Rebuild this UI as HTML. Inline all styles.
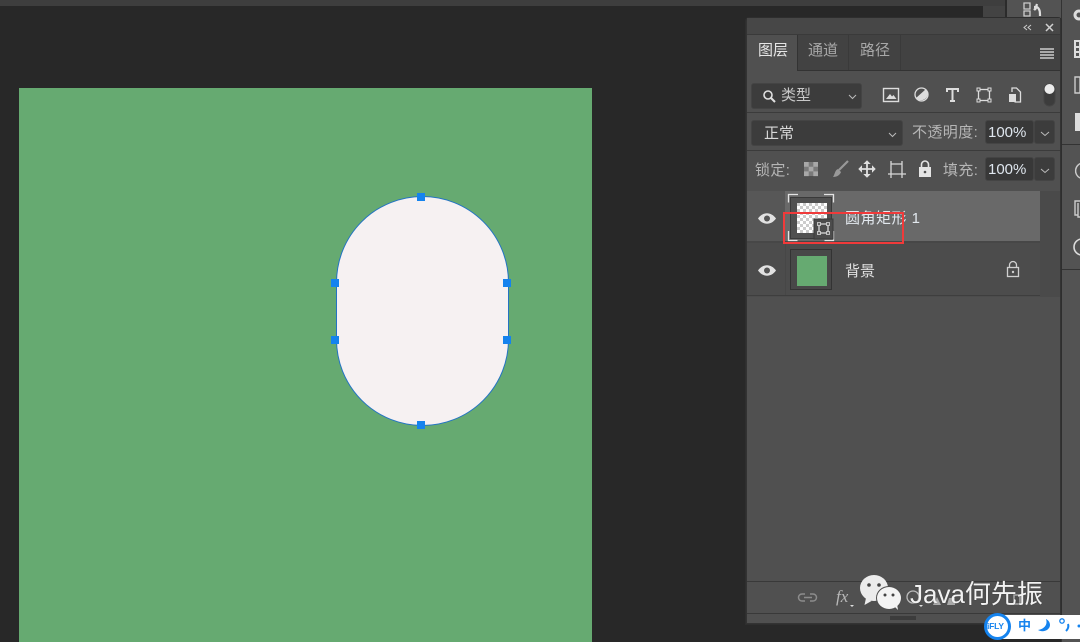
<!DOCTYPE html>
<html><head><meta charset="utf-8">
<style>
html,body{margin:0;padding:0}
body{width:1080px;height:642px;overflow:hidden;position:relative;background:#282828;font-family:"Liberation Sans","Noto Sans CJK SC",sans-serif}
.a{position:absolute;box-sizing:border-box}
.t{position:absolute;white-space:nowrap;line-height:1;filter:blur(.3px)}
.h{position:absolute;width:8px;height:8px;background:#1583ee}
svg{position:absolute;overflow:visible}
.box{position:absolute;background:#3c3c3c;border:1px solid #444;border-radius:3px;box-sizing:border-box}
</style></head><body>
<div class="a" style="left:0;top:0;width:1080px;height:6px;background:#3e3e3e"></div>
<div class="a" style="left:983px;top:6px;width:22px;height:12px;background:#434343"></div>
<div class="a" style="left:1005px;top:0;width:2px;height:18px;background:#2b2b2b"></div>
<!-- right strips -->
<div class="a" style="left:1007px;top:0;width:54px;height:18px;background:#535353"></div>
<div class="a" style="left:1061px;top:0;width:19px;height:642px;background:#535353;border-left:1px solid #333"></div>
<div class="a" style="left:1062px;top:144px;width:18px;height:1px;background:#333"></div>
<div class="a" style="left:1062px;top:269px;width:18px;height:1px;background:#333"></div>
<svg style="left:0;top:0" width="1080" height="642" fill="none">
<path d="M1024 3h6v6h-6zM1024 11h6v5h-6z" stroke="#ccc" stroke-width="1.3"/>
<path d="M1040 16c0-4 0-7-3-9l-3 3M1037 7h-3M1037 4l-2 6" stroke="#ddd" stroke-width="2.200"/>
<circle cx="1079" cy="15" r="4" stroke="#ddd" stroke-width="3"/>
<path d="M1075 41h5v16h-5z M1075 47h5M1075 52h5" stroke="#ddd" stroke-width="2"/>
<path d="M1075 77h5v16h-5z" stroke="#ccc" stroke-width="1.4"/>
<path d="M1075 113h5v18h-5z" fill="#ddd"/>
<path d="M1082 163a8 8 0 0 0-2 15" stroke="#ccc" stroke-width="1.4"/>
<path d="M1082 201h-7v14h3M1078 203v14h4" stroke="#ccc" stroke-width="1.4"/>
<path d="M1082 239a8 8 0 0 0 0 16" stroke="#ddd" stroke-width="1.6"/>
</svg>
<!-- canvas -->
<div class="a" style="left:335.500px;top:196.500px;width:0;height:0"></div>
<div class="a" style="left:19px;top:88px;width:573px;height:554px;background:#66aa71"></div>
<div class="a" style="left:335.500px;top:196px;width:173px;height:230px;border-radius:86.500px;background:#f6f1f2;border:1.500px solid #2373c4"></div>
<div class="h" style="left:417px;top:193px"></div>
<div class="h" style="left:417px;top:421px"></div>
<div class="h" style="left:331px;top:279px"></div>
<div class="h" style="left:503px;top:279px"></div>
<div class="h" style="left:331px;top:336px"></div>
<div class="h" style="left:503px;top:336px"></div>
<!-- panel -->
<div class="a" style="left:746px;top:18px;width:315px;height:606px;background:#505050;border:1px solid #333;border-top:0;border-radius:3px 3px 0 0;box-shadow:0 0 0 1px #2e2e2e"></div>
<div class="a" style="left:747px;top:18px;width:313px;height:17px;background:#474747;border-bottom:1px solid #3a3a3a"></div>
<div class="a" style="left:747px;top:35px;width:313px;height:36px;background:#424242;border-bottom:1px solid #333"></div>
<div class="a" style="left:747px;top:35px;width:51px;height:36px;background:#505050;border-right:1px solid #333"></div>
<div class="a" style="left:848px;top:35px;width:1px;height:35px;background:#3a3a3a"></div>
<div class="a" style="left:900px;top:35px;width:1px;height:35px;background:#3a3a3a"></div>
<div class="t" style="left:758px;top:43px;font-size:15px;color:#e6e6e6">图层</div>
<div class="t" style="left:808px;top:43px;font-size:15px;color:#a8a8a8">通道</div>
<div class="t" style="left:860px;top:43px;font-size:15px;color:#a8a8a8">路径</div>
<svg style="left:0;top:0" width="1080" height="642" fill="none">
<path d="M1027 25l-3 2.500 3 2.500M1031 25l-3 2.500 3 2.500" stroke="#ccc" stroke-width="1"/>
<path d="M1046 24l7 7M1053 24l-7 7" stroke="#d0d0d0" stroke-width="1.5"/>
<path d="M1040 49h14M1040 52h14M1040 55h14M1040 58h14" stroke="#ccc" stroke-width="1.5"/>
</svg>
<!-- row 1 -->
<div class="a" style="left:747px;top:112px;width:313px;height:1px;background:#3b3b3b"></div>
<div class="box" style="left:751px;top:83px;width:111px;height:26px"></div>
<svg style="left:0;top:0" width="1080" height="642" fill="none">
<circle cx="768" cy="95" r="4" stroke="#e0e0e0" stroke-width="1.6"/><path d="M771 98l4 4" stroke="#e0e0e0" stroke-width="2"/>
<path d="M849 95l3.500 3.500 3.500-3.500" stroke="#bbb"/>
<rect x="883.500" y="88.500" width="15" height="13" stroke="#ddd" stroke-width="1.4"/><path d="M886 99l4-5 2 2.500 1.500-1.500 3 4z" fill="#ddd"/>
<circle cx="921.500" cy="94.500" r="6.500" stroke="#ddd" stroke-width="1.300"/><path d="M916 98a6.500 6.500 0 0 0 10-9z" fill="#ddd"/>
<path d="M947 92v-3h11v3M952.500 89v12M950 101h5" stroke="#ddd" stroke-width="2"/>
<rect x="978.500" y="89.500" width="11" height="11" stroke="#ddd" stroke-width="1.3"/>
<path d="M977 88h3v3h-3zM988 88h3v3h-3zM977 99h3v3h-3zM988 99h3v3h-3z" fill="#4f4f4f" stroke="#ddd"/>
<path d="M1012 92v-4h4.500l4 4v10h-6" stroke="#ddd" stroke-width="1.300"/><rect x="1009" y="94" width="7" height="8" fill="#ddd"/>
<rect x="1044" y="84" width="11" height="22" rx="5.500" fill="#3c3c3c" stroke="#444"/><circle cx="1049.500" cy="89" r="5" fill="#ececec"/>
</svg>
<div class="t" style="left:781px;top:88px;font-size:15px;color:#c8c8c8">类型</div>
<!-- row 2 -->
<div class="a" style="left:747px;top:150px;width:313px;height:1px;background:#3b3b3b"></div>
<div class="box" style="left:751px;top:120px;width:152px;height:26px"></div>
<div class="t" style="left:764px;top:126px;font-size:15px;color:#d8d8d8">正常</div>
<div class="t" style="left:912px;top:125px;font-size:15px;letter-spacing:.4px;color:#b5b5b5">不透明度:</div>
<div class="box" style="left:985px;top:120px;width:49px;height:24px;background:#383838"></div>
<div class="box" style="left:1034px;top:120px;width:21px;height:24px"></div>
<div class="t" style="left:988px;top:125px;font-size:15px;color:#dfe6ee">100%</div>
<!-- row 3 -->
<div class="t" style="left:755px;top:163px;font-size:15px;letter-spacing:.4px;color:#b5b5b5">锁定:</div>
<div class="t" style="left:943px;top:163px;font-size:15px;letter-spacing:.4px;color:#b5b5b5">填充:</div>
<div class="box" style="left:985px;top:157px;width:49px;height:24px;background:#383838"></div>
<div class="box" style="left:1034px;top:157px;width:21px;height:24px"></div>
<div class="t" style="left:988px;top:162px;font-size:15px;color:#dfe6ee">100%</div>
<svg style="left:0;top:0" width="1080" height="642" fill="none">
<path d="M889 133l3.500 3.500 3.500-3.500" stroke="#bbb"/>
<path d="M1041 132l4 3.500 4-3.500M1041 169l4 3.500 4-3.500" stroke="#bbb"/>
<rect x="804" y="162" width="14" height="14" fill="#7a7a7a"/><path d="M804 162h4.700v4.700h-4.700zM813.300 162h4.700v4.700h-4.700zM808.700 166.700h4.700v4.700h-4.700zM804 171.400h4.700v4.700h-4.700zM813.300 171.400h4.700v4.700h-4.700z" fill="#a8a8a8"/>
<path d="M848 161l-9 9" stroke="#999" stroke-width="2.200"/><path d="M838 169c-3 1-3 5-5 8 4 0 7-2 8-5z" fill="#999"/>
<path d="M867 163v12M861 169h12" stroke="#e0e0e0" stroke-width="1.800"/><path d="M867 161l-2.500 2.500h5zM867 177l-2.500-2.500h5zM859 169l2.500-2.500v5zM875 169l-2.500-2.500v5z" fill="#e0e0e0" stroke="#e0e0e0"/>
<path d="M891 164h11v10h-11zM888 174h18M891 161v17M902 161v17" stroke="#d8d8d8" stroke-width="1.300"/>
<rect x="919" y="167" width="12" height="10" fill="#e4e4e4"/><path d="M921.500 167v-2.500a3.500 3.500 0 0 1 7 0v2.500" stroke="#e4e4e4" stroke-width="1.600"/><circle cx="925" cy="172" r="1.300" fill="#4f4f4f"/>
</svg>
<!-- layers -->
<div class="a" style="left:747px;top:191px;width:293px;height:106px;background:#4c4c4c"></div>
<div class="a" style="left:1040px;top:191px;width:20px;height:106px;background:#4a4a4a"></div>
<div class="a" style="left:785px;top:191px;width:255px;height:50px;background:#696969"></div>
<div class="a" style="left:747px;top:191px;width:38px;height:50px;background:#575757"></div>
<div class="a" style="left:747px;top:241px;width:293px;height:2px;background:#474747"></div>
<div class="a" style="left:747px;top:295px;width:293px;height:1px;background:#3e3e3e"></div>
<div class="a" style="left:785px;top:243px;width:1px;height:52px;background:#474747"></div>
<svg style="left:0;top:0" width="1080" height="642">
<defs><pattern id="c" width="6" height="6" patternUnits="userSpaceOnUse" x="797" y="203"><rect width="6" height="6" fill="#fff"/><rect width="3" height="3" fill="#ccc"/><rect x="3" y="3" width="3" height="3" fill="#ccc"/></pattern></defs>
<path d="M758 218.500c5-7 13-7 18 0c-5 7-13 7-18 0z" fill="#e2e2e2"/><circle cx="767" cy="218.500" r="3" fill="#555"/>
<path d="M758 270.500c5-7 13-7 18 0c-5 7-13 7-18 0z" fill="#e2e2e2"/><circle cx="767" cy="270.500" r="3" fill="#555"/>
<rect x="790.500" y="197.500" width="41" height="41" fill="#505050" stroke="#3a3a3a"/>
<path d="M798 194.500h-9.500v8M824 194.500h9.500v8M788.500 231v9.500h9M833.500 231v9.500h-9" fill="none" stroke="#e4e4e4" stroke-width="1.300"/>
<rect x="797" y="203" width="30" height="30" fill="url(#c)"/>
<rect x="814" y="219" width="19" height="20" fill="#4c4c4c" stroke="#3a3a3a"/>
<path d="M819 224h9v9h-9z" fill="none" stroke="#ddd" stroke-width="1.300"/>
<path d="M817.500 222.500h3v3h-3zM826.500 222.500h3v3h-3zM817.500 231.500h3v3h-3zM826.500 231.500h3v3h-3z" fill="#666" stroke="#ddd" stroke-width=".8"/>
<rect x="790.500" y="249.500" width="41" height="40" fill="#484848" stroke="#333"/>
<rect x="797" y="256" width="30" height="30" fill="#66aa71"/>
<rect x="1007.500" y="267.500" width="11" height="9" fill="none" stroke="#d0d0d0" stroke-width="1.300"/>
<path d="M1009.500 267v-2a3.500 3.500 0 0 1 7 0v2" fill="none" stroke="#d0d0d0" stroke-width="1.300"/><circle cx="1013" cy="272" r="1.200" fill="#d0d0d0"/>
</svg>
<div class="t" style="left:845px;top:211px;font-size:15px;letter-spacing:.5px;color:#e2e8ee">圆角矩形 1</div>
<div class="t" style="left:845px;top:264px;font-size:15px;color:#e0e0e0">背景</div>
<div class="a" style="left:783px;top:212px;width:121px;height:32px;border:2px solid #f03a3a"></div>
<!-- footer -->
<div class="a" style="left:747px;top:581px;width:313px;height:1px;background:#393939"></div>
<div class="a" style="left:747px;top:613px;width:313px;height:1px;background:#393939"></div>
<div class="a" style="left:890px;top:616px;width:26px;height:4px;background:#3c3c3c"></div>
<div class="t" style="left:836px;top:588px;font-size:17px;font-style:italic;font-family:'Liberation Serif',serif;color:#b8b8b8">fx</div>
<svg style="left:0;top:0" width="1080" height="642">
<path d="M805 594h-3a3.500 3.500 0 0 0 0 7h3M810 594h3a3.500 3.500 0 0 1 0 7h-3M804 597.500h8" fill="none" stroke="#8c8c8c" stroke-width="1.500"/>
<path d="M850 605h4l-2 2z" fill="#ddd"/><path d="M919 605h4l-2 2z" fill="#ddd"/>
<path d="M933 605l4-8 4 8z" fill="#aaa"/><path d="M947 605h8v-7h-6z" fill="#aaa"/>
<circle cx="913" cy="597" r="6" fill="none" stroke="#bbb" stroke-width="1.300"/>
<path d="M1014 595h6v9h-6z" fill="none" stroke="#aaa" stroke-width="1.500"/>
<!-- wechat -->
<ellipse cx="874" cy="588" rx="14" ry="13" fill="#ececec"/>
<path d="M866 598l-1.500 7 7-4z" fill="#ececec"/>
<ellipse cx="889" cy="598" rx="13" ry="12" fill="#4f4f4f"/>
<ellipse cx="889" cy="598" rx="12" ry="11" fill="#f4f4f4"/>
<path d="M894 606l4 4-1-6z" fill="#f4f4f4"/>
<circle cx="869" cy="585" r="1.800" fill="#444"/><circle cx="879" cy="585" r="1.800" fill="#444"/>
<circle cx="885" cy="595" r="1.500" fill="#444"/><circle cx="893" cy="595" r="1.500" fill="#444"/>
</svg>
<div class="t" style="left:910px;top:581px;font-size:26px;color:#f2f2f2;text-shadow:0 0 1px #333">Java何先振</div>
<!-- ifly -->
<div class="a" style="left:998px;top:615px;width:82px;height:24px;background:#fff"></div>
<div class="a" style="left:984px;top:613px;width:27px;height:27px;border-radius:50%;background:#fff;border:3px solid #1583ee"></div>
<div class="t" style="left:987px;top:622px;font-size:8.500px;font-weight:bold;color:#1583ee;letter-spacing:-.2px">iFLY</div>
<div class="t" style="left:1018px;top:619px;font-size:13px;font-weight:bold;color:#1583ee">中</div>
<svg style="left:0;top:0" width="1080" height="642">
<path d="M1046 619c2 6-2 10-8 11c5 3 12 0 12-5c0-3-2-5-4-6z" fill="#1583ee"/>
<circle cx="1062" cy="621" r="2.200" fill="none" stroke="#1583ee" stroke-width="1.300"/>
<path d="M1068 624c1 3 0 5-2 7" fill="none" stroke="#1583ee" stroke-width="2"/>
<circle cx="1079" cy="626" r="1.500" fill="#1583ee"/>
</svg>
</body></html>
